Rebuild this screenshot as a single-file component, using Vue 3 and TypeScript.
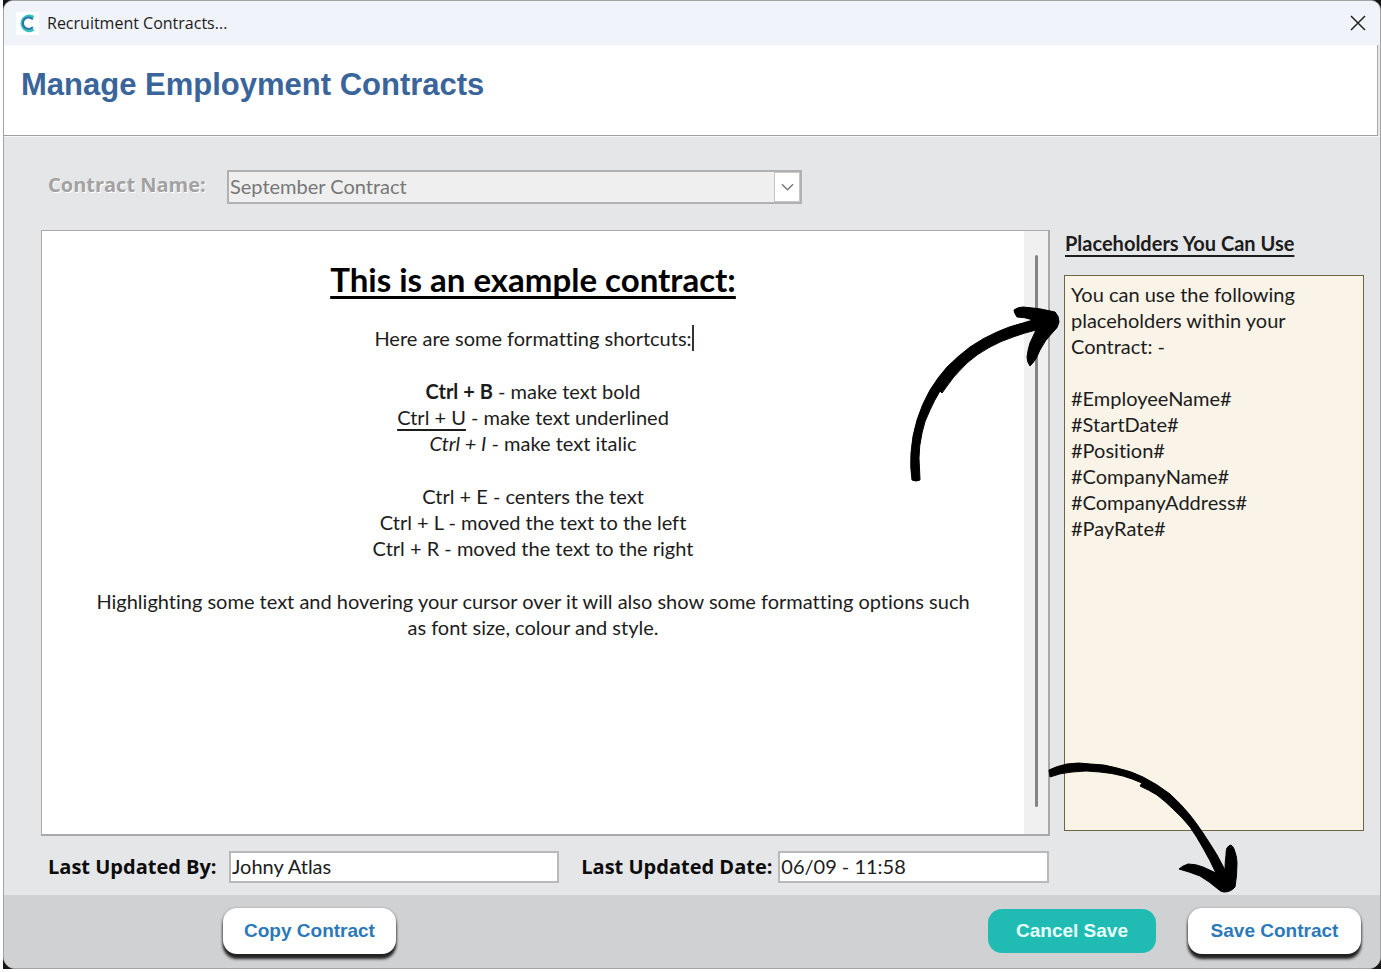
<script setup lang="ts">
import { ref } from 'vue'

interface Shortcut {
  keys: string
  text: string
  look?: 'bold' | 'underline' | 'italic'
}

const contracts: string[] = ['September Contract']
const contractName = ref<string>('September Contract')
const updatedBy = ref<string>('Johny Atlas')
const updatedDate = ref<string>('06/09 - 11:58')

const shortcutGroups: Shortcut[][] = [
  [
    { keys: 'Ctrl + B', text: 'make text bold', look: 'bold' },
    { keys: 'Ctrl + U', text: 'make text underlined', look: 'underline' },
    { keys: 'Ctrl + I', text: 'make text italic', look: 'italic' },
  ],
  [
    { keys: 'Ctrl + E', text: 'centers the text' },
    { keys: 'Ctrl + L', text: 'moved the text to the left' },
    { keys: 'Ctrl + R', text: 'moved the text to the right' },
  ],
]

const placeholders: string[] = [
  '#EmployeeName#',
  '#StartDate#',
  '#Position#',
  '#CompanyName#',
  '#CompanyAddress#',
  '#PayRate#',
]
</script>

<template>
  <div class="desktop">
    <div class="window">
      <header class="titlebar">
        <svg class="logo" viewBox="0 0 24 24" aria-hidden="true">
          <rect width="24" height="24" fill="#fff" />
          <path d="M18.4 5.4A7.8 7.8 0 1 0 18.4 18.2" fill="none" stroke="#35c3ba" stroke-width="3" />
          <path d="M17.6 7.6A6 6 0 1 0 17.6 15.8" fill="none" stroke="#2a74ae" stroke-width="2.2" />
        </svg>
        <span class="caption">Recruitment Contracts...</span>
        <button class="close" type="button" aria-label="Close">
          <svg viewBox="0 0 16 16" aria-hidden="true">
            <path d="M1 1L15 15M15 1L1 15" fill="none" stroke="#222" stroke-width="1.5" />
          </svg>
        </button>
      </header>

      <div class="heading">
        <h1>Manage Employment Contracts</h1>
      </div>

      <main class="body">
        <div class="name-row">
          <label class="label muted" for="contract">Contract Name:</label>
          <div class="combo">
            <select id="contract" v-model="contractName" disabled>
              <option v-for="c in contracts" :key="c">{{ c }}</option>
            </select>
            <span class="combo-arrow">
              <svg viewBox="0 0 14 8" aria-hidden="true">
                <path d="M1 1L7 7L13 1" fill="none" stroke="#777" stroke-width="1.5" />
              </svg>
            </span>
          </div>
        </div>

        <div class="columns">
          <section class="editor">
            <div class="page" role="textbox" aria-multiline="true" aria-label="Contract text">
              <h2>This is an example contract:</h2>
              <p>Here are some formatting shortcuts:<span class="caret"></span></p>
              <div v-for="(group, g) in shortcutGroups" :key="g" class="group">
                <div v-for="s in group" :key="s.keys">
                  <span :class="s.look">{{ s.keys }}</span> - {{ s.text }}
                </div>
              </div>
              <p>
                Highlighting some text and hovering your cursor over it will also show some formatting options such
                as font size, colour and style.
              </p>
            </div>
            <div class="track"><div class="thumb"></div></div>
          </section>

          <aside class="side">
            <h3>Placeholders You Can Use</h3>
            <div class="note">
              <p>You can use the following placeholders within your Contract: -</p>
              <ul>
                <li v-for="p in placeholders" :key="p">{{ p }}</li>
              </ul>
            </div>
            <svg class="arrow arrow-up" viewBox="0 0 150 176" aria-hidden="true">
              <path
                d="M2 173Q0 160 1 146Q2 129 7 113Q12 97 20 83Q28 70 37 60Q48 49 60 40Q73 31 87 25Q100 19 113 16L123 13Q115 10 107 10Q104 6 104 3Q108 0 113 0Q130 1 145 5Q149 9 149 15Q148 21 143 25Q135 33 130 43Q126 54 120 59Q117 55 117 50Q118 42 120 36L126 23Q114 26 103 30Q91 34 80 40Q67 47 57 56Q43 69 32 86L30 84Q24 94 20 103Q14 115 12 126Q9 139 9 151L10 173Q6 175 2 173Z"
              />
            </svg>
            <svg class="arrow arrow-down" viewBox="0 0 190 130" aria-hidden="true">
              <path
                d="M1 7Q9 3 19 1Q31 -1 42 1Q56 1 69 5Q83 8 95 14Q109 21 122 31Q133 41 142 52Q149 61 155 70Q163 82 169 92L177 107Q177 99 178 92Q178 87 179 85Q181 82 183 82Q186 84 187 89Q189 94 189 100Q189 113 187 124Q183 129 176 129Q173 129 170 126Q162 119 152 113Q142 109 131 106Q134 103 140 101Q148 101 155 104L168 110Q162 97 155 85Q149 74 142 64Q134 54 125 46Q117 38 109 32Q101 27 92 23L94 20Q85 16 75 13Q64 10 52 9Q38 7 24 9Q12 10 2 14Z"
              />
            </svg>
          </aside>
        </div>

        <div class="meta">
          <label class="label" for="by">Last Updated By:</label>
          <input id="by" v-model="updatedBy" class="by" type="text" />
          <label class="label" for="date">Last Updated Date:</label>
          <input id="date" v-model="updatedDate" class="date" type="text" />
        </div>
      </main>

      <footer class="footer">
        <button class="btn raised copy" type="button">Copy Contract</button>
        <button class="btn teal" type="button">Cancel Save</button>
        <button class="btn raised" type="button">Save Contract</button>
      </footer>
    </div>
  </div>
</template>

<style>
body {
  background: #fff;
}
</style>

<style scoped>
.desktop {
  box-sizing: border-box;
  min-height: 100vh;
  display: flex;
  border-left: 3px solid #fff;
  border-bottom: 3px solid #fff;
  background: #161616;
  font-family: Lato, "Liberation Sans", sans-serif;
  font-size: 20px;
  font-variant-ligatures: none;
  line-height: 26px;
  color: #1c1c1c;
}
.window {
  flex: 1;
  min-width: 0;
  display: flex;
  flex-direction: column;
  border: 1px solid #a3a4a5;
  border-radius: 10px 10px 12px 12px;
  overflow: hidden;
  background: #e5e6e8;
}
h1,
h2,
h3,
p,
ul {
  margin: 0;
  padding: 0;
}
.titlebar {
  height: 44px;
  display: flex;
  align-items: center;
  padding: 0 14px 0 12px;
  gap: 8px;
  background: #f0f3f9;
}
.logo {
  width: 23px;
  height: 23px;
}
.caption {
  flex: 1;
  font-family: "Open Sans", "Noto Sans", sans-serif;
  font-size: 16px;
  line-height: 22px;
}
.close {
  width: 16px;
  height: 16px;
  padding: 0;
  border: 0;
  background: none;
  display: flex;
}
.close svg {
  width: 16px;
  height: 16px;
}
.heading {
  height: 90px;
  display: flex;
  align-items: center;
  margin-right: 2px;
  padding: 0 17px;
  border-right: 1px solid #a9a9a9;
  border-bottom: 1px solid #a0a0a0;
  background: #fff;
}
h1 {
  margin-bottom: 11px;
  font-family: "Liberation Sans", Arial, sans-serif;
  font-size: 31px;
  line-height: 36px;
  color: #3a659b;
}
.body {
  flex: 1;
  display: flex;
  flex-direction: column;
  padding: 33px 16px 12px 37px;
  border-top: 1px solid #f6f6f6;
}
.name-row {
  display: flex;
  align-items: center;
  margin-bottom: 26px;
  padding-left: 7px;
}
.label {
  font-family: "Open Sans", "Noto Sans", sans-serif;
  font-weight: 700;
  color: #0c0c0c;
  white-space: nowrap;
}
.muted {
  width: 179px;
  padding-bottom: 4px;
  color: #a2a2a2;
  text-shadow: 1px 1px 0 #fff;
}
.combo {
  width: 43.7%;
  height: 34px;
  box-sizing: border-box;
  display: flex;
  border: 2px solid #b1b1b1;
  background: #efefef;
}
select {
  flex: 1;
  min-width: 0;
  appearance: none;
  border: 0;
  padding: 0 1px 2px;
  background: none;
  font: inherit;
  color: #777;
  opacity: 1;
}
.combo-arrow {
  width: 24px;
  display: flex;
  align-items: center;
  justify-content: center;
  border: 1px solid #c6c6c6;
  background: #fff;
}
.combo-arrow svg {
  width: 13px;
  height: 8px;
}
.columns {
  flex: 1;
  display: flex;
  gap: 14px;
}
.editor {
  flex: 1;
  min-width: 0;
  display: flex;
  border: solid #a9a9a9;
  border-width: 1px 2px 2px 1px;
  background: #fff;
}
.page {
  flex: 1;
  padding: 29px 45px;
  text-align: center;
}
h2 {
  margin-bottom: 27px;
  font-size: 33px;
  line-height: 38px;
  color: #000;
  text-decoration: underline;
  text-decoration-thickness: 3px;
  text-underline-offset: 4px;
  text-decoration-skip-ink: none;
}
.page p,
.group {
  margin-bottom: 27px;
}
.caret {
  display: inline-block;
  width: 2px;
  height: 26px;
  margin-right: -2px;
  vertical-align: top;
  background: #333;
}
.bold {
  font-weight: 700;
}
.underline {
  text-decoration: underline;
  text-underline-offset: 4px;
}
.italic {
  font-style: italic;
}
.track {
  width: 24px;
  display: flex;
  justify-content: center;
  padding: 24px 0 27px;
  box-sizing: border-box;
  background: #f0f0f0;
}
.thumb {
  width: 3px;
  border-radius: 2px;
  background: #858585;
}
.side {
  position: relative;
  width: 300px;
  display: flex;
  flex-direction: column;
  padding-bottom: 5px;
}
h3 {
  margin-bottom: 19px;
  padding-left: 1px;
  font-size: 20px;
  line-height: 26px;
  text-decoration: underline;
  text-decoration-thickness: 2px;
  text-underline-offset: 4px;
}
.note {
  flex: 1;
  padding: 5px 40px 5px 6px;
  border: 1px solid #6d6546;
  background: #faf3e7;
}
.note p {
  margin-bottom: 26px;
}
.note ul {
  list-style: none;
}
.arrow {
  position: absolute;
  overflow: visible;
  fill: #000;
  stroke: #000;
  stroke-width: 1px;
  stroke-linejoin: round;
}
.arrow-up {
  left: -154px;
  top: 77px;
  width: 150px;
  height: 176px;
}
.arrow-down {
  left: -16px;
  top: 533px;
  width: 190px;
  height: 130px;
}
.meta {
  display: flex;
  align-items: center;
  margin-top: 15px;
  padding: 0 315px 0 7px;
}
.meta input {
  box-sizing: border-box;
  height: 32px;
  min-width: 0;
  padding: 0 1px 2px;
  border: 2px solid #b9b9b9;
  border-radius: 0;
  background: #fff;
  font: inherit;
  color: #1c1c1c;
}
.meta .label {
  width: 181px;
}
.meta .by {
  flex: 332;
}
.meta .by + .label {
  width: 197px;
  margin-left: 22px;
}
.meta .date {
  flex: 271;
}
.footer {
  height: 73px;
  box-sizing: border-box;
  display: flex;
  align-items: center;
  padding: 13px 19px 14px 219px;
  gap: 32px;
  background: #d0d1d3;
}
.btn {
  box-sizing: border-box;
  height: 46px;
  border: 0;
  border-radius: 14px;
  font-family: "Liberation Sans", Arial, sans-serif;
  font-size: 19px;
  font-weight: 700;
  line-height: 24px;
}
.raised {
  width: 173px;
  background: #fff;
  color: #2b79b9;
  box-shadow: 0 5px 3px #222, 0 1px 3px #555;
}
.copy {
  margin-right: auto;
}
.teal {
  width: 168px;
  height: 44px;
  background: #20bcb3;
  color: #e9fffb;
}
</style>
